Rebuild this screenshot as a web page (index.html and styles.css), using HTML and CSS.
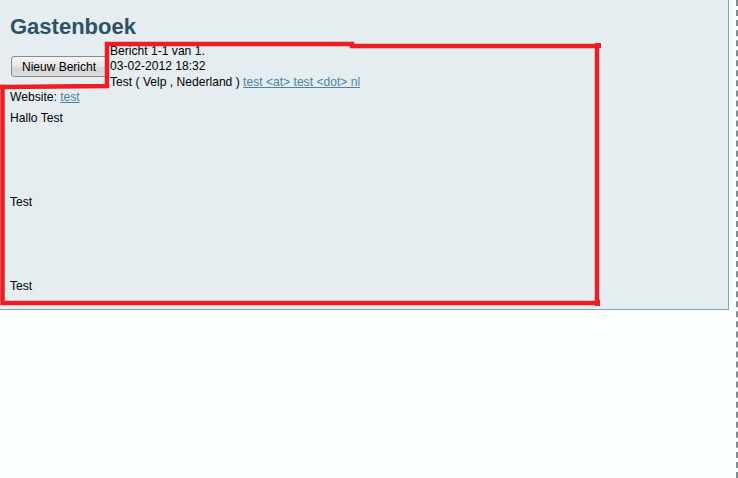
FILE: index.html
```html
<!DOCTYPE html>
<html lang="nl">
<head>
  <meta charset="UTF-8" />
  <title>Gastenboek</title>
  <link rel="stylesheet" href="styles.css">
</head>
<body>
  <div class="page">
    <div class="main">
      <div class="panel">
        <h1>Gastenboek</h1>
        <div class="entry-head">
          <button class="btn">Nieuw Bericht</button>
          <div class="meta">
            <div>Bericht 1-1 van 1.</div>
            <div>03-02-2012 18:32</div>
            <div>Test ( Velp , Nederland ) <a href="#">test &lt;at&gt; test &lt;dot&gt; nl</a></div>
          </div>
        </div>
        <div class="website">Website: <a href="#">test</a></div>
        <div class="message">Hallo Test<br><br><br><br><br><br>Test<br><br><br><br><br><br>Test</div>
      </div>
    </div>
    <div class="edge"></div>
  </div>

  <!-- red marker lines drawn over the screenshot -->
  <svg class="marks" width="738" height="478" viewBox="0 0 738 478">
    <g fill="none" stroke="#ee1c25" stroke-width="4.5" stroke-linecap="square" stroke-linejoin="miter">
      <polyline points="2.5,87 107,86 107,44 352,44" />
      <polyline points="352,46 597,46 597,303 2.5,303 2.5,87" />
    </g>
    <rect x="595" y="43" width="6" height="5" fill="#ee1c25" />
    <rect x="595" y="300" width="5" height="6" fill="#ee1c25" />
  </svg>
</body>
</html>
```

FILE: styles.css
```css
body {
  margin: 0;
  font-family: "Liberation Sans", Arial, sans-serif;
  font-size: 12.1px;
  color: #000;
  background-color: #fbfefe;
}
.page {
  display: flex;
  min-height: 100vh;
}
.main {
  width: 736px;
}
.panel {
  box-sizing: border-box;
  width: 729px;
  background-color: #e5edf1;
  border-right: 1px solid #7fa8b8;
  border-bottom: 1px solid #7fa8b8;
  padding: 14px 0 16px 10px;
}
h1 {
  margin: 0;
  font-size: 22px;
  line-height: 26px;
  font-weight: bold;
  color: #2e5264;
}
.entry-head {
  display: flex;
  align-items: center;
  gap: 3px;
  margin-top: 4px;
}
.btn {
  box-sizing: border-box;
  width: 96px;
  height: 21px;
  margin-left: 1px;
  padding: 0;
  font-family: "Liberation Sans", Arial, sans-serif;
  font-size: 12px;
  color: #000;
  border: 1px solid #8a8a8a;
  border-radius: 3px;
  background: linear-gradient(#f6f6f6, #e4e4e4 50%, #d6d6d6 51%, #dcdcdc);
}
.meta div {
  line-height: 15.3px;
  white-space: nowrap;
}
a {
  color: #4a84a2;
  text-decoration: underline;
}
.website {
  line-height: 14px;
}
.message {
  margin-top: 7px;
  line-height: 14px;
}
.edge {
  width: 0;
  border-left: 2px dashed #7f8d8d;
}
.marks {
  position: absolute;
  top: 0;
  left: 0;
  pointer-events: none;
}
```
